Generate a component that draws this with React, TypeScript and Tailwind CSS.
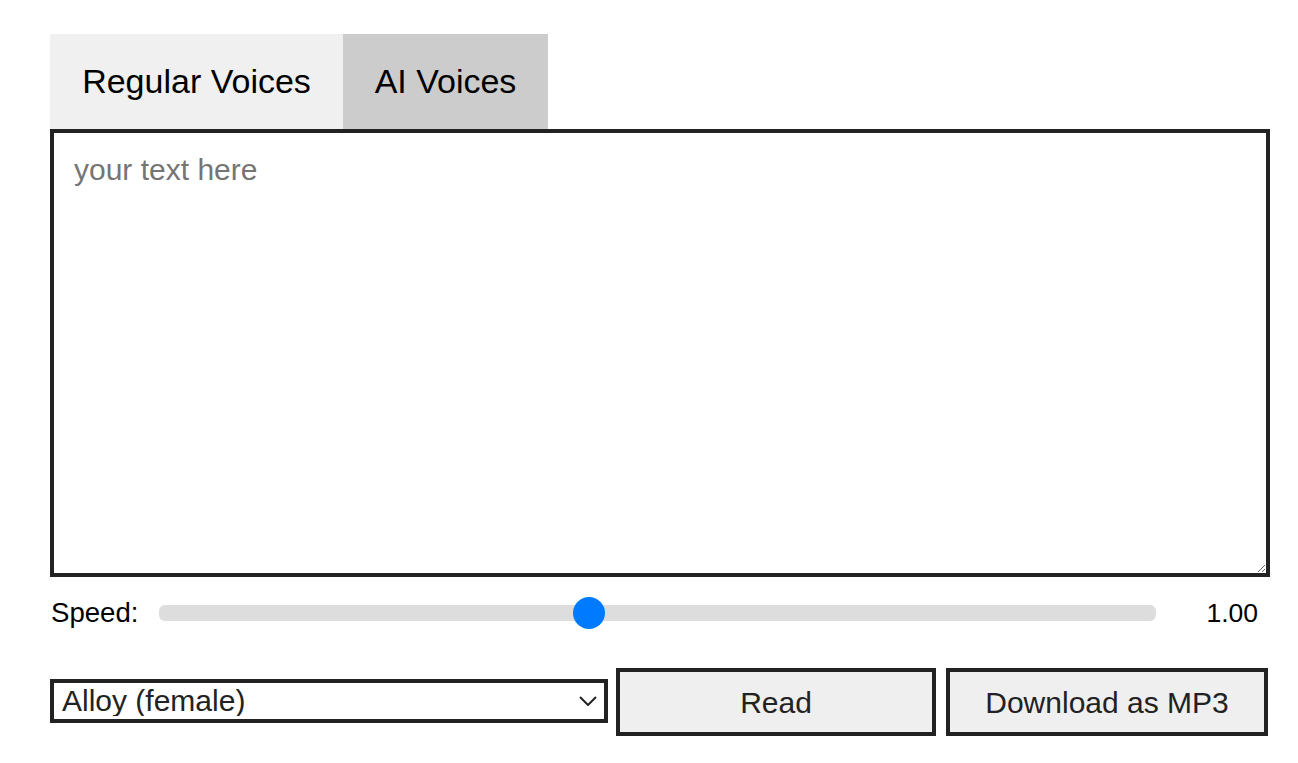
import React from "react";

export default function App() {
  const min = 0.25;
  const max = 2;
  const value = 1;
  const pct = (value - min) / (max - min);
  return (
    <div
      className="min-h-[763px] bg-white text-black"
      style={{ fontFamily: '"Liberation Sans", Arial, sans-serif' }}
    >
      <div className="ml-[50px] pt-[34px] w-[1220px]">
        <div className="flex">
          <div className="w-[293px] h-[95px] bg-[#f0f0f0] flex items-center justify-center text-[34px] text-black">
            Regular Voices
          </div>
          <div className="w-[205px] h-[95px] bg-[#cccccc] flex items-center justify-center text-[34px] text-black">
            AI Voices
          </div>
        </div>
        <textarea
          className="block w-[1220px] h-[448px] border-4 border-[#222222] px-[20px] pt-[20px] pb-[16px] text-[30px] leading-[1.15] outline-none placeholder:text-[#757575]"
          placeholder="your text here"
          style={{ fontFamily: '"Liberation Sans", Arial, sans-serif' }}
        />
        <div className="flex items-center h-[32px] mt-[20px]">
          <div className="w-[109px] text-[27.6px] text-black leading-none pl-[1px]">Speed:</div>
          <div className="relative flex-1 h-[16px] rounded-[6px] bg-[#dddddd]">
            <div
              className="absolute top-1/2 w-[32px] h-[32px] -translate-y-1/2 rounded-full bg-[#007bff]"
              style={{ left: `calc(${pct} * (100% - 32px))` }}
            />
          </div>
          <div className="w-[114px] pr-[12px] text-right text-[26.5px] leading-none text-black">1.00</div>
        </div>
        <div className="flex items-start mt-[39px]">
          <div className="relative w-[558px] h-[44px] mt-[11px]">
            <select
              className="appearance-none w-full h-full border-4 border-[#222222] bg-white pl-[8px] pr-[30px] text-[30px] leading-none text-[#222222] outline-none"
              style={{ fontFamily: '"Liberation Sans", Arial, sans-serif' }}
              defaultValue="alloy"
            >
              <option value="alloy">Alloy (female)</option>
              <option value="echo">Echo (male)</option>
              <option value="fable">Fable (male)</option>
              <option value="onyx">Onyx (male)</option>
              <option value="nova">Nova (female)</option>
              <option value="shimmer">Shimmer (female)</option>
            </select>
            <svg
              className="pointer-events-none absolute right-[11px] top-[17px]"
              width="18"
              height="10"
              viewBox="0 0 18 10"
              fill="none"
            >
              <path d="M1 1 L9 9 L17 1" stroke="#222222" strokeWidth="2" />
            </svg>
          </div>
          <button
            className="ml-[8px] w-[320px] h-[68px] border-4 border-[#222222] bg-[#efefef] text-[30px] text-[#222222]"
            style={{ fontFamily: '"Liberation Sans", Arial, sans-serif' }}
          >
            Read
          </button>
          <button
            className="ml-[10px] w-[322px] h-[68px] border-4 border-[#222222] bg-[#efefef] text-[30px] text-[#222222]"
            style={{ fontFamily: '"Liberation Sans", Arial, sans-serif' }}
          >
            Download as MP3
          </button>
        </div>
      </div>
    </div>
  );
}
